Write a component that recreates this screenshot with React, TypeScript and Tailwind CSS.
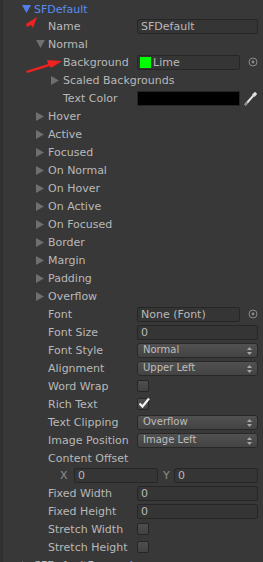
// Unity-style GUIStyle inspector (dark skin), SFDefault expanded.
import React from "react";

const FONT = "font-['DejaVu_Sans',_'Liberation_Sans',_sans-serif]";

// ── Small drawings ────────────────────────────────────────────────────────────

function Arrow({ open, blue }: { open?: boolean; blue?: boolean }) {
  const fill = blue ? "#4f7fe6" : "#6f6f6f";
  return open ? (
    <svg width="9" height="8" viewBox="0 0 9 8" className="shrink-0">
      <polygon points="0,0 9,0 4.5,8" fill={fill} />
    </svg>
  ) : (
    <svg width="8" height="9" viewBox="0 0 8 9" className="shrink-0">
      <polygon points="0,0 8,4.5 0,9" fill={fill} />
    </svg>
  );
}

function PickerDot() {
  return (
    <svg width="10" height="10" viewBox="0 0 10 10" className="shrink-0">
      <circle cx="5" cy="5" r="4" fill="none" stroke="#8a8a8a" strokeWidth="1" />
      <circle cx="5" cy="5" r="1.4" fill="#8a8a8a" />
    </svg>
  );
}

function Eyedropper() {
  return (
    <svg width="14" height="15" viewBox="0 0 14 15" className="shrink-0">
      <path d="M1.5 13.5 L9 5" stroke="#e0e0e0" strokeWidth="2" strokeLinecap="round" />
      <path d="M8 3.5 L11 0.8 L13.2 3 L10.5 6 Z" fill="#e0e0e0" />
      <path d="M1 14 L3.5 11.5" stroke="#7a7a7a" strokeWidth="1.5" />
    </svg>
  );
}

// ── Controls ──────────────────────────────────────────────────────────────────

function TextField({ value, className = "" }: { value: string; className?: string }) {
  return (
    <div
      className={`flex h-[15px] items-center rounded-[2px] border border-[#262626] bg-[#353535] pl-[3px] text-[11px] leading-none text-[#b9b9b9] ${className}`}
    >
      {value}
    </div>
  );
}

function Popup({ value }: { value: string }) {
  return (
    <div className="relative flex h-[15px] w-full items-center rounded-[3px] border border-[#282828] bg-gradient-to-b from-[#515151] to-[#434343] pl-[5px] text-[10px] leading-none text-[#bdbdbd]">
      {value}
      <svg width="5" height="8" viewBox="0 0 5 8" className="absolute right-[5px] top-[3px]">
        <polygon points="0,3 5,3 2.5,0" fill="#a8a8a8" />
        <polygon points="0,5 5,5 2.5,8" fill="#a8a8a8" />
      </svg>
    </div>
  );
}

function Toggle({ checked }: { checked?: boolean }) {
  return (
    <div className="relative h-[12px] w-[12px] rounded-[2px] border border-[#262626] bg-gradient-to-b from-[#4e4e4e] to-[#424242]">
      {checked && (
        <svg width="13" height="12" viewBox="0 0 13 12" className="absolute left-[0px] top-[-2px]">
          <path d="M1.5 6.5 L4.5 9.5 L11 1.5" fill="none" stroke="#f2f2f2" strokeWidth="2.2" />
        </svg>
      )}
    </div>
  );
}

// ── Rows ──────────────────────────────────────────────────────────────────────

type Fold = "open" | "closed" | undefined;

function Row({
  label,
  indent,
  fold,
  children,
  blue,
}: {
  label: string;
  indent: number;
  fold?: Fold;
  children?: React.ReactNode;
  blue?: boolean;
}) {
  return (
    <div className="flex h-[18px] shrink-0 items-center">
      <div className="flex w-[134px] shrink-0 items-center" style={{ paddingLeft: indent }}>
        {fold ? (
          <span className="flex w-[12px] shrink-0 items-center">
            <Arrow open={fold === "open"} blue={blue} />
          </span>
        ) : (
          <span className="w-[12px] shrink-0" />
        )}
        <span
          className={`whitespace-nowrap text-[11px] leading-none ${blue ? "text-[#5b8df0]" : "text-[#b8b8b8]"}`}
        >
          {label}
        </span>
      </div>
      <div className="flex min-w-0 flex-1 items-center pr-[5px]">{children}</div>
    </div>
  );
}

const STATES = [
  "Hover",
  "Active",
  "Focused",
  "On Normal",
  "On Hover",
  "On Active",
  "On Focused",
  "Border",
  "Margin",
  "Padding",
  "Overflow",
];

export default function App() {
  return (
    <div className={`relative flex h-[562px] w-[263px] overflow-hidden bg-[#383838] ${FONT}`}>
      <div className="w-[3px] shrink-0 bg-[#303030]" />
      <div className="flex min-w-0 flex-1 flex-col">
        <div className="h-[17px] shrink-0">
          <Row label="SFDefault" indent={19} fold="open" blue />
        </div>
        <Row label="Name" indent={33}>
          <TextField value="SFDefault" className="w-full" />
        </Row>
        <Row label="Normal" indent={33} fold="open" />
        <Row label="Background" indent={48}>
          <div className="flex h-[15px] flex-1 items-center rounded-[2px] border border-[#262626] bg-[#353535] pl-[2px] text-[11px] leading-none text-[#b9b9b9]">
            <span className="mr-[2px] h-[11px] w-[11px] bg-[#00ff00]" />
            Lime
          </div>
          <span className="flex w-[18px] justify-end">
            <PickerDot />
          </span>
        </Row>
        <Row label="Scaled Backgrounds" indent={48} fold="closed" />
        <Row label="Text Color" indent={48}>
          <div className="h-[15px] flex-1 border border-[#262626] bg-[#000000]" />
          <span className="flex w-[18px] justify-end">
            <Eyedropper />
          </span>
        </Row>
        {STATES.map((s) => (
          <Row key={s} label={s} indent={33} fold="closed" />
        ))}
        <Row label="Font" indent={33}>
          <TextField value="None (Font)" className="flex-1" />
          <span className="flex w-[18px] justify-end">
            <PickerDot />
          </span>
        </Row>
        <Row label="Font Size" indent={33}>
          <TextField value="0" className="w-full" />
        </Row>
        <Row label="Font Style" indent={33}>
          <Popup value="Normal" />
        </Row>
        <Row label="Alignment" indent={33}>
          <Popup value="Upper Left" />
        </Row>
        <Row label="Word Wrap" indent={33}>
          <Toggle />
        </Row>
        <Row label="Rich Text" indent={33}>
          <Toggle checked />
        </Row>
        <Row label="Text Clipping" indent={33}>
          <Popup value="Overflow" />
        </Row>
        <Row label="Image Position" indent={33}>
          <Popup value="Image Left" />
        </Row>
        <Row label="Content Offset" indent={33} />
        {/* X / Y vector row */}
        <div className="flex h-[17px] shrink-0 items-center pr-[5px] pl-[57px] text-[11px] leading-none text-[#8e8e8e]">
          <span className="w-[14px]">X</span>
          <TextField value="0" className="flex-1" />
          <span className="w-[16px] pl-[5px]">Y</span>
          <TextField value="0" className="flex-1" />
        </div>
        <Row label="Fixed Width" indent={33}>
          <TextField value="0" className="w-full" />
        </Row>
        <Row label="Fixed Height" indent={33}>
          <TextField value="0" className="w-full" />
        </Row>
        <Row label="Stretch Width" indent={33}>
          <Toggle />
        </Row>
        <Row label="Stretch Height" indent={33}>
          <Toggle />
        </Row>
        <Row label="SFDefaultFocused" indent={19} fold="closed" />
      </div>

      {/* red annotation arrows */}
      <svg width="263" height="562" className="pointer-events-none absolute left-0 top-0">
        <polygon points="26,24 37,17 33,28 31,25 27,27" fill="#ee2222" />
        <polygon points="26,71 48,64 47,60 62,61 51,68 50,66 27,73" fill="#ee2222" />
      </svg>
    </div>
  );
}
